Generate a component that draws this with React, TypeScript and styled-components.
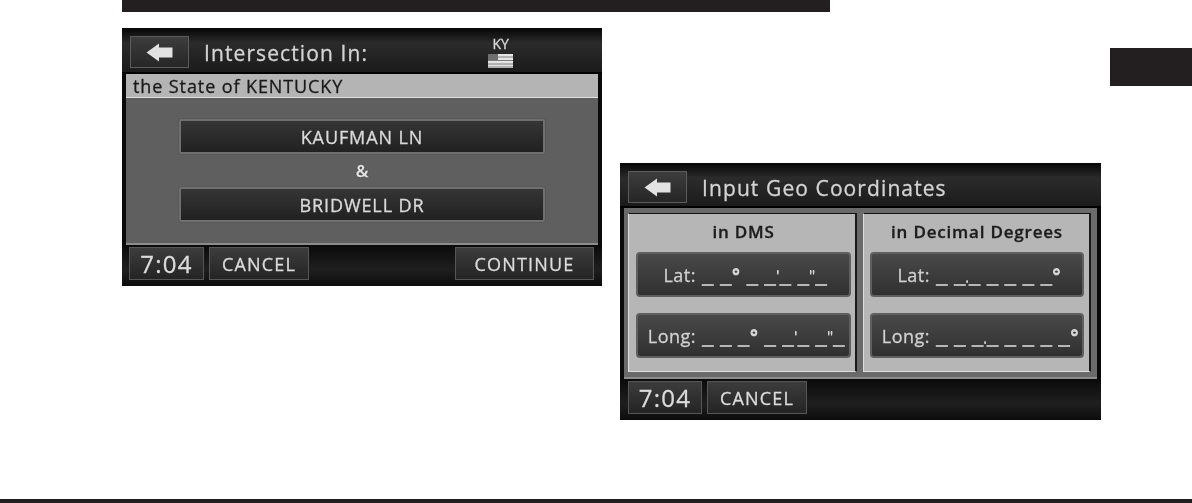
import React from "react";
import styled, { createGlobalStyle } from "styled-components";

const GlobalStyle = createGlobalStyle`
  html, body {
    margin: 0;
    padding: 0;
    background: #fff;
  }
`;

const Page = styled.div`
  width: 1192px;
  height: 503px;
  overflow: hidden;
  display: grid;
  grid-template-columns: 122px 480px 18px 481px 9px 82px;
  grid-template-rows: 12px 1fr 4px;
  font-family: "Open Sans", "Liberation Sans", sans-serif;
`;

const TopBar = styled.div`
  grid-column: 2 / 5;
  grid-row: 1;
  width: 708px;
  background: #231f20;
`;

const BottomBar = styled.div`
  grid-column: 1 / -1;
  grid-row: 3;
  background: #231f20;
`;

const LeftCol = styled.div`
  grid-column: 2;
  grid-row: 2;
  padding-top: 16px;
`;

const RightCol = styled.div`
  grid-column: 4;
  grid-row: 2;
  padding-top: 151px;
`;

const TabCol = styled.div`
  grid-column: 6;
  grid-row: 2;
  padding-top: 36px;
`;

const SectionTab = styled.div`
  height: 38px;
  background: #231f20;
`;

const Screen = styled.div<{ $height: number }>`
  height: ${(p) => p.$height}px;
  display: flex;
  flex-direction: column;
  background: #0a0a0a;
  padding: 0 4px;
  box-sizing: border-box;
  filter: blur(0.35px);
  -webkit-text-stroke: 0.3px;
`;

const Header = styled.div<{ $height: number }>`
  flex: none;
  height: ${(p) => p.$height}px;
  margin: 0 -4px;
  padding: 8px 8px 0;
  box-sizing: border-box;
  display: flex;
  align-items: flex-start;
  background: linear-gradient(#060606 0%, #2b2b2b 35%, #1b1b1b 100%);
  border-bottom: 2px solid #000;
`;

const BackButton = styled.div<{ $width: number }>`
  flex: none;
  width: ${(p) => p.$width}px;
  height: 32px;
  display: flex;
  align-items: center;
  justify-content: center;
  box-sizing: border-box;
  border: 1px solid #5c5c5c;
  background: linear-gradient(#3d3d3d, #262626);
`;

const Title = styled.div`
  margin-left: 15px;
  height: 32px;
  line-height: 34px;
  font-size: 21px;
  font-weight: 500;
  letter-spacing: 1.1px;
  color: #d4d4d4;
  white-space: nowrap;
`;

const StateBadge = styled.div`
  margin-left: 120px;
  display: flex;
  flex-direction: column;
  align-items: center;
  gap: 2px;
  font-size: 14px;
  line-height: 16px;
  font-weight: 500;
  color: #d8d8d8;
`;

const Banner = styled.div`
  flex: none;
  height: 24px;
  line-height: 24px;
  padding-left: 7px;
  box-sizing: border-box;
  background: #b4b4b4;
  border-bottom: 1px solid #e0e0e0;
  font-size: 18px;
  font-weight: 500;
  letter-spacing: 0.9px;
  color: #1a1a1a;
  white-space: nowrap;
`;

const StreetArea = styled.div`
  flex: none;
  height: 147px;
  box-sizing: border-box;
  display: flex;
  flex-direction: column;
  align-items: center;
  padding-top: 21px;
  background: #5f5f5f;
  border-bottom: 2px solid #8c8c8c;
`;

const StreetButton = styled.div`
  width: 366px;
  height: 35px;
  display: flex;
  align-items: center;
  justify-content: center;
  box-sizing: border-box;
  border: 2px solid #6f6f6f;
  border-radius: 2px;
  background: linear-gradient(#353535, #212121);
  font-size: 18px;
  font-weight: 500;
  letter-spacing: 0.9px;
  color: #dadada;
  box-shadow: 0 0 1px #222;
`;

const Amp = styled.div`
  height: 33px;
  line-height: 33px;
  font-size: 17px;
  font-weight: 600;
  color: #e6e6e6;
  text-shadow: 0 0 1px #111, 0 0 1px #111;
`;

const Footer = styled.div<{ $inset: number }>`
  flex: 1;
  display: flex;
  padding: 2px 8px 0 ${(p) => p.$inset}px;
  gap: 5px;
  margin: 0 -4px;
  background: linear-gradient(#0a0a0a, #1f1f1f 60%, #0c0c0c);
`;

const FootButton = styled.div<{ $width: number; $clock?: boolean; $right?: boolean }>`
  flex: none;
  width: ${(p) => p.$width}px;
  height: 33px;
  margin-left: ${(p) => (p.$right ? "auto" : "0")};
  display: flex;
  align-items: center;
  justify-content: center;
  box-sizing: border-box;
  border: 1px solid #565656;
  background: linear-gradient(#3c3c3c, #242424);
  font-size: ${(p) => (p.$clock ? 24 : 18)}px;
  font-weight: 500;
  letter-spacing: 1.2px;
  color: #dcdcdc;
`;

const PanelArea = styled.div`
  flex: none;
  height: 171px;
  display: grid;
  grid-template-columns: 229px 228px;
  column-gap: 6px;
  padding: 5px 6px 0 4px;
  box-sizing: border-box;
  background: #6a6a6a;
  border-bottom: 2px solid #8c8c8c;
`;

const Panel = styled.div<{ $left: number; $right: number }>`
  height: 159px;
  padding: 10px ${(p) => p.$right}px 0 ${(p) => p.$left}px;
  box-sizing: border-box;
  display: flex;
  flex-direction: column;
  background: #b6b6b6;
  border-top: 1px solid #111;
  border-right: 2px solid #1a1a1a;
  border-left: 1px solid #ddd;
  border-bottom: 1px solid #ddd;
`;

const PanelTitle = styled.div`
  flex: none;
  height: 28px;
  line-height: 16px;
  text-align: center;
  font-size: 17px;
  font-weight: 600;
  letter-spacing: 0.8px;
  color: #1c1c1c;
  white-space: nowrap;
`;

const Field = styled.div`
  flex: none;
  height: 45px;
  margin-bottom: 16px;
  display: flex;
  align-items: center;
  box-sizing: border-box;
  border: 2px solid #5f5f5f;
  border-radius: 4px;
  background: linear-gradient(#494949, #303030);
  color: #d0d0d0;
  white-space: nowrap;
`;

const FieldLabel = styled.span`
  flex: none;
  width: 58px;
  margin-right: 6px;
  text-align: right;
  font-size: 18px;
  font-weight: 500;
  letter-spacing: 0.5px;
`;

const FieldBlanks = styled.span`
  font-family: "Liberation Sans", sans-serif;
  font-size: 21px;
  font-weight: 700;
  letter-spacing: 0.2px;
  color: #d6d6d6;
  text-shadow: 0 1px 0 #d6d6d6;
  -webkit-text-stroke: 0;
`;

const Mark = styled.span`
  font-size: 16px;
  font-weight: 400;
`;

const DecimalDot = styled.span`
  font-size: 10px;
`;

const ArrowIcon = () => (
  <svg width="27" height="19" viewBox="0 0 27 19">
    <path d="M0.5 9.5 L13 0.5 V4.5 H26.5 V14.5 H13 V18.5 Z" fill="#e2e2e2" />
  </svg>
);

const FlagIcon = () => (
  <svg width="25" height="14" viewBox="0 0 25 14">
    <rect width="25" height="14" fill="#e4e4e4" />
    <path d="M0 3H25M0 6.5H25M0 10H25M0 13H25" stroke="#7d7d7d" strokeWidth="1" />
    <rect width="10" height="6" fill="#6f6f6f" />
  </svg>
);

const App: React.FC = () => (
  <Page>
    <GlobalStyle />
    <TopBar />
    <LeftCol>
      <Screen $height={258}>
        <Header $height={46}>
          <BackButton $width={59}>
            <ArrowIcon />
          </BackButton>
          <Title>Intersection In:</Title>
          <StateBadge>
            KY
            <FlagIcon />
          </StateBadge>
        </Header>
        <Banner>the State of KENTUCKY</Banner>
        <StreetArea>
          <StreetButton>KAUFMAN LN</StreetButton>
          <Amp>&amp;</Amp>
          <StreetButton>BRIDWELL DR</StreetButton>
        </StreetArea>
        <Footer $inset={7}>
          <FootButton $width={75} $clock>7:04</FootButton>
          <FootButton $width={100}>CANCEL</FootButton>
          <FootButton $width={139} $right>CONTINUE</FootButton>
        </Footer>
      </Screen>
    </LeftCol>
    <RightCol>
      <Screen $height={257}>
        <Header $height={45}>
          <BackButton $width={59}>
            <ArrowIcon />
          </BackButton>
          <Title>Input Geo Coordinates</Title>
        </Header>
        <PanelArea>
          <Panel $left={7} $right={4}>
            <PanelTitle>in DMS</PanelTitle>
            <Field>
              <FieldLabel>Lat:</FieldLabel>
              <FieldBlanks>_ _° _ _<Mark>'</Mark>_ _<Mark>"</Mark>_</FieldBlanks>
            </Field>
            <Field>
              <FieldLabel>Long:</FieldLabel>
              <FieldBlanks>_ _ _° _ _<Mark>'</Mark>_ _<Mark>"</Mark>_</FieldBlanks>
            </Field>
          </Panel>
          <Panel $left={6} $right={5}>
            <PanelTitle>in Decimal Degrees</PanelTitle>
            <Field>
              <FieldLabel>Lat:</FieldLabel>
              <FieldBlanks>_ _<DecimalDot>.</DecimalDot>_ _ _ _ _°</FieldBlanks>
            </Field>
            <Field>
              <FieldLabel>Long:</FieldLabel>
              <FieldBlanks>_ _ _<DecimalDot>.</DecimalDot>_ _ _ _ _°</FieldBlanks>
            </Field>
          </Panel>
        </PanelArea>
        <Footer $inset={8}>
          <FootButton $width={74} $clock>7:04</FootButton>
          <FootButton $width={100}>CANCEL</FootButton>
        </Footer>
      </Screen>
    </RightCol>
    <TabCol>
      <SectionTab />
    </TabCol>
    <BottomBar />
  </Page>
);

export default App;
